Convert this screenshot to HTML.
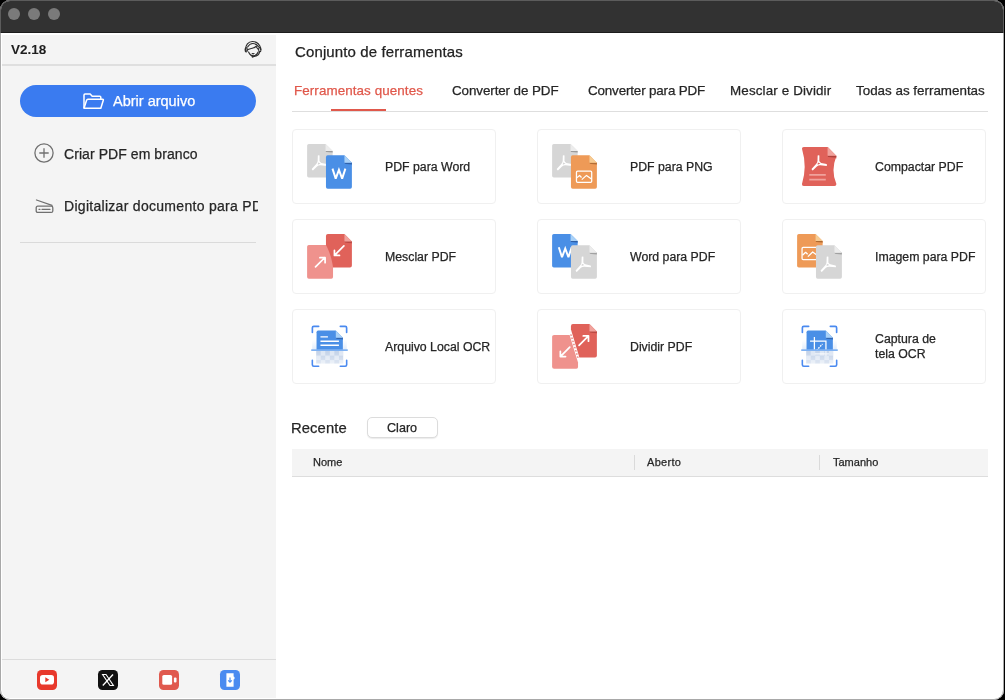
<!DOCTYPE html>
<html><head><meta charset="utf-8">
<style>
*{margin:0;padding:0;box-sizing:border-box}
html,body{width:1005px;height:700px;overflow:hidden;background:#000;font-family:"Liberation Sans",sans-serif}
#win{position:absolute;left:0;top:0;width:1004px;height:700px;border-radius:10px;overflow:hidden;background:#fff}
#frame{position:absolute;left:0;top:0;width:1004px;height:700px;border-radius:10px;border:1px solid #a8a8a8;pointer-events:none}
#ftop{position:absolute;left:0;top:0;width:1004px;height:33px;border-radius:10px 10px 0 0;border:1px solid #5c5c5c;border-bottom:0;pointer-events:none}
#hl{position:absolute;left:1px;top:33px;width:1002px;height:666px;border:1px solid rgba(255,255,255,0.95);border-top:0;border-radius:0 0 9px 9px;pointer-events:none}
.t{position:absolute;white-space:nowrap;line-height:1;will-change:transform;-webkit-text-stroke:0.25px currentColor}
.a{position:absolute}
.card{position:absolute;width:204px;height:75px;border:1px solid #f0f0f0;border-radius:4px;background:#fff}
svg{position:absolute;overflow:visible}
</style></head><body>
<div id="win">
<div class="a" style="left:0;top:0;width:1004px;height:33px;background:#323232;border-bottom:1px solid #1c1c1c"></div>
<div class="a" style="left:8px;top:8px;width:12px;height:12px;border-radius:50%;background:#7a7a7a"></div>
<div class="a" style="left:28px;top:8px;width:12px;height:12px;border-radius:50%;background:#7a7a7a"></div>
<div class="a" style="left:48px;top:8px;width:12px;height:12px;border-radius:50%;background:#7a7a7a"></div>
<div class="a" style="left:0;top:35px;width:276px;height:665px;background:#f4f4f4"></div>
<div class="a" style="left:0;top:64px;width:276px;height:2px;background:#dfdfdf"></div>
<div class="t" style="left:11px;top:42.77px;font-size:13.5px;color:#1e1e1e;font-weight:bold;letter-spacing:0px;-webkit-text-stroke:0.05px currentColor">V2.18</div>
<svg style="left:243px;top:38.5px" width="20" height="20" viewBox="0 0 20 20">
<g fill="none" stroke="#2e2e2e" stroke-width="1.15" stroke-linecap="round" stroke-linejoin="round">
<path d="M2.6 11.5 C2.2 6 5.5 2.5 9.4 2.5 C14 2.5 17.6 5.8 17.6 10.4"/>
<path d="M4.6 8 C6 5.6 7.8 4.5 9.8 4.5 C12 4.5 14 5.5 15.4 7.6"/>
<ellipse cx="3.2" cy="10.8" rx="1.1" ry="2.2"/>
<ellipse cx="16.8" cy="10.5" rx="1.2" ry="2.2"/>
<path d="M3.8 11.2 C6.5 9.6 9 9.6 11.2 8.6 C12.2 8.2 12.8 7.6 13.2 7.2 C13.6 8.6 14.2 9.6 15.4 10.4"/>
<path d="M5.6 13 C6.6 15.6 8.4 16.8 10.4 16.8 C12.4 16.8 14 15.6 15 13.2"/>
<path d="M9.2 14.6 C9.8 14.9 10.4 14.9 11 14.6"/>
<path d="M16.6 12.8 C16.2 15.2 13.6 17.2 10 17.6"/>
</g><circle cx="9.6" cy="17.6" r="1.1" fill="#2e2e2e"/></svg>
<div class="a" style="left:20px;top:85px;width:236px;height:32px;border-radius:16px;background:#3a7bf0"></div>
<svg style="left:82px;top:92px" width="23" height="18" viewBox="0 0 23 18">
<g fill="none" stroke="#fff" stroke-width="1.5" stroke-linejoin="round">
<path d="M2 16.3 V3 Q2 2 3 2 H8.2 L10.2 4.3 H17.8 Q18.8 4.3 18.8 5.3 V7"/>
<path d="M2 16.3 L4.6 8.2 Q4.9 7.2 5.9 7.2 H20.6 Q21.6 7.2 21.3 8.2 L18.8 16.3 Z"/>
</g></svg>
<div class="t" style="left:112.8px;top:94.43px;font-size:14.5px;color:#ffffff;font-weight:normal;letter-spacing:0px;">Abrir arquivo</div>
<svg style="left:34.3px;top:143px" width="20" height="20" viewBox="0 0 20 20">
<g fill="none" stroke="#707070" stroke-width="1.3">
<circle cx="10" cy="10" r="9.1"/>
<path d="M10 5.3 V14.7 M5.3 10 H14.7"/>
</g></svg>
<div class="t" style="left:64.4px;top:147.25px;font-size:14px;color:#262626;font-weight:normal;letter-spacing:0.07px;">Criar PDF em branco</div>
<svg style="left:35px;top:199px" width="19" height="15" viewBox="0 0 19 15">
<g fill="none" stroke="#707070" stroke-width="1.3" stroke-linecap="round">
<path d="M1.5 1 L17 6.3"/>
<rect x="1.2" y="7.2" width="16.6" height="6.2" rx="1.5"/>
<path d="M4 10.3 H5 M7 10.3 H15"/>
</g></svg>
<div class="a" style="left:0;top:190px;width:258px;height:30px;overflow:hidden"><div class="t" style="left:64.4px;top:9.25px;font-size:14px;color:#262626;font-weight:normal;letter-spacing:0.29px;">Digitalizar documento para PDF</div>
</div>
<div class="a" style="left:20px;top:242px;width:236px;height:1px;background:#dadada"></div>
<div class="a" style="left:0;top:659px;width:276px;height:1px;background:#dcdcdc"></div>
<svg style="left:37px;top:670px" width="20" height="20" viewBox="0 0 20 20">
<rect width="20" height="20" rx="4.5" fill="#e8392c"/>
<rect x="3" y="5" width="14" height="9.5" rx="2.8" fill="#fff"/>
<path d="M8.3 7.3 L12.3 9.75 L8.3 12.2 Z" fill="#e8392c"/>
</svg>
<svg style="left:98px;top:670px" width="20" height="20" viewBox="0 0 20 20">
<rect width="20" height="20" rx="4.5" fill="#111"/>
<path d="M4.6 4.5 H8 L15.4 15.5 H12 Z" fill="none" stroke="#fff" stroke-width="1.1"/>
<path d="M15 4.5 L4.8 15.5" stroke="#fff" stroke-width="1.3"/>
</svg>
<svg style="left:158.5px;top:670px" width="20" height="20" viewBox="0 0 20 20">
<rect width="20" height="20" rx="4.5" fill="#e0594e"/>
<rect x="3.3" y="5" width="9.8" height="9.8" rx="1.6" fill="#fff"/>
<rect x="14.9" y="7.4" width="2.6" height="5" rx="1" fill="#fff"/>
</svg>
<svg style="left:220px;top:670px" width="20" height="20" viewBox="0 0 20 20">
<rect width="20" height="20" rx="4.5" fill="#4b8bf0"/>
<path d="M6.4 3.3 H13.6 V6.5 L14.5 7 V9 L13.6 9.5 V16.7 H6.4 Z" fill="#fff"/>
<path d="M10 7.5 V12 M8.2 10.3 L10 12.2 L11.8 10.3" fill="none" stroke="#4b8bf0" stroke-width="1.2"/>
</svg>
<div class="t" style="left:294.8px;top:44.00px;font-size:15px;color:#222;font-weight:normal;letter-spacing:0.12px;">Conjunto de ferramentas</div>
<div class="t" style="left:294.0px;top:83.86px;font-size:13.4px;color:#e0584b;font-weight:normal;letter-spacing:0.09px;">Ferramentas quentes</div>
<div class="t" style="left:452px;top:83.86px;font-size:13.4px;color:#262626;font-weight:normal;letter-spacing:-0.09px;">Converter de PDF</div>
<div class="t" style="left:587.9px;top:83.86px;font-size:13.4px;color:#262626;font-weight:normal;letter-spacing:-0.15px;">Converter para PDF</div>
<div class="t" style="left:730.0px;top:83.86px;font-size:13.4px;color:#262626;font-weight:normal;letter-spacing:0.14px;">Mesclar e Dividir</div>
<div class="t" style="left:855.9px;top:83.86px;font-size:13.4px;color:#262626;font-weight:normal;letter-spacing:0px;">Todas as ferramentas</div>
<div class="a" style="left:292px;top:111px;width:696px;height:1px;background:#dedede"></div>
<div class="a" style="left:331px;top:109px;width:55px;height:2px;background:#e0584b"></div>
<div class="card" style="left:292px;top:129px"></div>
<svg style="left:302px;top:140px" width="55" height="55" viewBox="0 0 700 700"><defs>
<linearGradient id="shG" x1="0" y1="0" x2="0" y2="1"><stop offset="0" stop-color="#8a8a8a"/><stop offset="1" stop-color="#d6d6d6"/></linearGradient>
<linearGradient id="shB" x1="0" y1="0" x2="0" y2="1"><stop offset="0" stop-color="#244f94"/><stop offset="1" stop-color="#4a8fe6"/></linearGradient>
<linearGradient id="shO" x1="0" y1="0" x2="0" y2="1"><stop offset="0" stop-color="#9a5a25"/><stop offset="1" stop-color="#ee9a57"/></linearGradient>
<linearGradient id="shR" x1="0" y1="0" x2="0" y2="1"><stop offset="0" stop-color="#9c3530"/><stop offset="1" stop-color="#e0625a"/></linearGradient>
<linearGradient id="fadeC" x1="0" y1="0" x2="0" y2="1"><stop offset="0" stop-color="#fff" stop-opacity="0"/><stop offset="1" stop-color="#fff" stop-opacity="0.85"/></linearGradient>
<linearGradient id="glow" x1="0" y1="0" x2="0" y2="1"><stop offset="0" stop-color="#d6e6fb" stop-opacity="0"/><stop offset="1" stop-color="#c8ddf9" stop-opacity="1"/></linearGradient>
<pattern id="chk" x="180" y="395" width="116" height="116" patternUnits="userSpaceOnUse">
<rect width="116" height="116" fill="#dde6f3"/><rect width="58" height="58" fill="#c3d2e8"/><rect x="58" y="58" width="58" height="58" fill="#c3d2e8"/>
</pattern>
</defs><path d="M87,50 L300,50 L390,140 L390,456 Q390,478 368,478 L87,478 Q65,478 65,456 L65,72 Q65,50 87,50 Z" fill="#d6d6d6"/><path d="M300,140 L390,140 L390,168.8 L308,152.96 Z" fill="url(#shG)"/><path d="M300,50 L390,140 L300,140 Z" fill="#ececec"/><g transform="translate(78.6,152.7) scale(0.4002)"><path d="M308,110 Q306,120 302,290 Q295,345 250,392 L112,542 Q125,585 152,590 L282,458 Q330,420 392,422 L598,442 Q612,400 590,382 L422,346 Q372,330 360,288 L362,110 Q335,90 308,110 Z" fill="#fff"/><path d="M314,332 L394,366 L306,404 Z" fill="#d6d6d6"/></g><path d="M327,195 L540,195 L635,290 L635,598 Q635,620 613,620 L327,620 Q305,620 305,598 L305,217 Q305,195 327,195 Z" fill="#4a8fe6"/><path d="M540,290 L635,290 L635,320.4 L548,303.68 Z" fill="url(#shB)"/><path d="M540,195 L635,290 L540,290 Z" fill="#a9d1f7"/><path d="M388.0,364.0 L429.0,492.0 L470.0,379.4 L511.0,492.0 L552.0,364.0" fill="none" stroke="#fff" stroke-width="25" stroke-linejoin="miter" stroke-miterlimit="3"/></svg>
<div class="t" style="left:384.5px;top:160.99px;font-size:12.3px;color:#262626;font-weight:normal;letter-spacing:0px;">PDF para Word</div>
<div class="card" style="left:537px;top:129px"></div>
<svg style="left:547px;top:140px" width="55" height="55" viewBox="0 0 700 700"><path d="M87,50 L300,50 L390,140 L390,456 Q390,478 368,478 L87,478 Q65,478 65,456 L65,72 Q65,50 87,50 Z" fill="#d6d6d6"/><path d="M300,140 L390,140 L390,168.8 L308,152.96 Z" fill="url(#shG)"/><path d="M300,50 L390,140 L300,140 Z" fill="#ececec"/><g transform="translate(78.6,152.7) scale(0.4002)"><path d="M308,110 Q306,120 302,290 Q295,345 250,392 L112,542 Q125,585 152,590 L282,458 Q330,420 392,422 L598,442 Q612,400 590,382 L422,346 Q372,330 360,288 L362,110 Q335,90 308,110 Z" fill="#fff"/><path d="M314,332 L394,366 L306,404 Z" fill="#d6d6d6"/></g><path d="M327,195 L540,195 L635,290 L635,598 Q635,620 613,620 L327,620 Q305,620 305,598 L305,217 Q305,195 327,195 Z" fill="#ee9a57"/><path d="M540,290 L635,290 L635,320.4 L548,303.68 Z" fill="url(#shO)"/><path d="M540,195 L635,290 L540,290 Z" fill="#f6cb92"/><rect x="375" y="397" width="194" height="142" rx="14" fill="none" stroke="#fff" stroke-width="16"/><g fill="none" stroke="#fff" stroke-width="16" stroke-linejoin="round" stroke-linecap="butt"><path d="M378.0,482.0 L414.7,452.2 L439.4,476.9"/><path d="M442.5,504.7 L502.7,450.6 L566.0,497.0"/></g></svg>
<div class="t" style="left:629.5px;top:160.99px;font-size:12.3px;color:#262626;font-weight:normal;letter-spacing:0px;">PDF para PNG</div>
<div class="card" style="left:782px;top:129px"></div>
<svg style="left:792px;top:140px" width="55" height="55" viewBox="0 0 700 700"><path d="M150,88 L455,88 L565,205 Q490,395 565,560 Q567,586 540,586 L150,586 Q123,586 127,560 Q195,340 127,112 Q125,88 150,88 Z" fill="#e0625a"/><path d="M453,200 L565,200 L565,235.84 L461,216.12800000000001 Z" fill="url(#shR)"/><path d="M453,88 L565,200 L453,200 Z" fill="#f0a29c"/><g transform="translate(203.6,152.7) scale(0.4002)"><path d="M308,110 Q306,120 302,290 Q295,345 250,392 L112,542 Q125,585 152,590 L282,458 Q330,420 392,422 L598,442 Q612,400 590,382 L422,346 Q372,330 360,288 L362,110 Q335,90 308,110 Z" fill="#fff"/><path d="M314,332 L394,366 L306,404 Z" fill="#e0625a"/></g><path d="M220,445 H430 M220,505 H430" stroke="#f0a29c" stroke-width="22"/></svg>
<div class="t" style="left:874.5px;top:160.99px;font-size:12.3px;color:#262626;font-weight:normal;letter-spacing:0px;">Compactar PDF</div>
<div class="card" style="left:292px;top:219px"></div>
<svg style="left:302px;top:230px" width="55" height="55" viewBox="0 0 700 700"><path d="M87,190 L395,190 L395,190 L395,598 Q395,620 373,620 L87,620 Q65,620 65,598 L65,212 Q65,190 87,190 Z" fill="#ef928d"/><path d="M330,50 L540,50 L635,145 L635,452 Q635,476 611,476 L395,476 C382,380 350,270 305,190 L305,75 Q305,50 330,50 Z" fill="#e0625a"/><path d="M540,145 L635,145 L635,175.4 L548,158.68 Z" fill="url(#shR)"/><path d="M540,50 L635,145 L540,145 Z" fill="#f0a29c"/><g stroke="#fff" stroke-width="22" fill="none" stroke-linecap="round" stroke-linejoin="round"><path d="M172,468 L292,350 M228,352 H294 V416"/><path d="M533,203 L413,322 M413,258 V324 H477"/></g></svg>
<div class="t" style="left:384.5px;top:250.99px;font-size:12.3px;color:#262626;font-weight:normal;letter-spacing:0px;">Mesclar PDF</div>
<div class="card" style="left:537px;top:219px"></div>
<svg style="left:547px;top:230px" width="55" height="55" viewBox="0 0 700 700"><path d="M87,50 L300,50 L390,140 L390,456 Q390,478 368,478 L87,478 Q65,478 65,456 L65,72 Q65,50 87,50 Z" fill="#4a8fe6"/><path d="M300,140 L390,140 L390,168.8 L308,152.96 Z" fill="url(#shB)"/><path d="M300,50 L390,140 L300,140 Z" fill="#a9d1f7"/><path d="M150.0,220.0 L191.0,346.0 L232.0,235.1 L273.0,346.0 L314.0,220.0" fill="none" stroke="#fff" stroke-width="25" stroke-linejoin="miter" stroke-miterlimit="3"/><path d="M327,195 L540,195 L635,290 L635,598 Q635,620 613,620 L327,620 Q305,620 305,598 L305,217 Q305,195 327,195 Z" fill="#d6d6d6"/><path d="M540,290 L635,290 L635,320.4 L548,303.68 Z" fill="url(#shG)"/><path d="M540,195 L635,290 L540,290 Z" fill="#ececec"/><g transform="translate(318.6,297.7) scale(0.4002)"><path d="M308,110 Q306,120 302,290 Q295,345 250,392 L112,542 Q125,585 152,590 L282,458 Q330,420 392,422 L598,442 Q612,400 590,382 L422,346 Q372,330 360,288 L362,110 Q335,90 308,110 Z" fill="#fff"/><path d="M314,332 L394,366 L306,404 Z" fill="#d6d6d6"/></g></svg>
<div class="t" style="left:629.5px;top:250.99px;font-size:12.3px;color:#262626;font-weight:normal;letter-spacing:0px;">Word para PDF</div>
<div class="card" style="left:782px;top:219px"></div>
<svg style="left:792px;top:230px" width="55" height="55" viewBox="0 0 700 700"><path d="M87,50 L300,50 L390,140 L390,456 Q390,478 368,478 L87,478 Q65,478 65,456 L65,72 Q65,50 87,50 Z" fill="#ee9a57"/><path d="M300,140 L390,140 L390,168.8 L308,152.96 Z" fill="url(#shO)"/><path d="M300,50 L390,140 L300,140 Z" fill="#f6cb92"/><rect x="128" y="222" width="195" height="156" rx="14" fill="none" stroke="#fff" stroke-width="16"/><g fill="none" stroke="#fff" stroke-width="16" stroke-linejoin="round" stroke-linecap="butt"><path d="M133.0,322.0 L173.8,283.8 L198.5,308.5"/><path d="M202.3,338.9 L263.1,280.0 L320.0,322.0"/></g><path d="M327,195 L540,195 L635,290 L635,598 Q635,620 613,620 L327,620 Q305,620 305,598 L305,217 Q305,195 327,195 Z" fill="#d6d6d6"/><path d="M540,290 L635,290 L635,320.4 L548,303.68 Z" fill="url(#shG)"/><path d="M540,195 L635,290 L540,290 Z" fill="#ececec"/><g transform="translate(318.6,297.7) scale(0.4002)"><path d="M308,110 Q306,120 302,290 Q295,345 250,392 L112,542 Q125,585 152,590 L282,458 Q330,420 392,422 L598,442 Q612,400 590,382 L422,346 Q372,330 360,288 L362,110 Q335,90 308,110 Z" fill="#fff"/><path d="M314,332 L394,366 L306,404 Z" fill="#d6d6d6"/></g></svg>
<div class="t" style="left:874.5px;top:250.99px;font-size:12.3px;color:#262626;font-weight:normal;letter-spacing:0px;">Imagem para PDF</div>
<div class="card" style="left:292px;top:309px"></div>
<svg style="left:302px;top:320px" width="55" height="55" viewBox="0 0 700 700"><g fill="none" stroke="#4a8af0" stroke-width="21" stroke-linecap="round"><path d="M132,158 V100 Q132,82 150,82 H212"/><path d="M488,82 H550 Q568,82 568,100 V158"/><path d="M132,512 V570 Q132,588 150,588 H212"/><path d="M488,588 H550 Q568,588 568,570 V512"/></g><rect x="130" y="250" width="440" height="125" fill="url(#glow)" opacity="0.6"/><path d="M205,135 L430,135 L520,225 L520,385 L185,385 L185,155 Q185,135 205,135 Z" fill="#4a8fe6"/><path d="M430,225 L520,225 L520,253.8 L438,237.96 Z" fill="url(#shB)"/><path d="M430,135 L520,225 L430,225 Z" fill="#a9d1f7"/><path d="M235,215 H330 M235,270 H470 M235,322 H470" stroke="#fff" stroke-width="18"/><rect x="180" y="395" width="345" height="160" fill="url(#chk)"/><rect x="140" y="395" width="420" height="170" fill="url(#fadeC)" opacity="0.55"/><rect x="115" y="372" width="470" height="24" rx="10" fill="#80b2f2"/></svg>
<div class="t" style="left:384.5px;top:340.99px;font-size:12.3px;color:#262626;font-weight:normal;letter-spacing:0px;">Arquivo Local OCR</div>
<div class="card" style="left:537px;top:309px"></div>
<svg style="left:547px;top:320px" width="55" height="55" viewBox="0 0 700 700"><path d="M90,190 L288,190 L395,540 L395,598 Q395,620 373,620 L90,620 Q65,620 65,596 L65,214 Q65,190 90,190 Z" fill="#ef928d"/><path d="M330,50 L540,50 L635,145 L635,452 Q635,476 611,476 L412,476 L305,122 L305,75 Q305,50 330,50 Z" fill="#e0625a"/><path d="M540,145 L635,145 L635,175.4 L548,158.68 Z" fill="url(#shR)"/><path d="M540,50 L635,145 L540,145 Z" fill="#f0a29c"/><path d="M303,182 L401,500" stroke="#e46a62" stroke-width="15" stroke-dasharray="20 22"/><g stroke="#fff" stroke-width="22" fill="none" stroke-linecap="round" stroke-linejoin="round"><path d="M290,345 L170,465 M170,400 V466 H236"/><path d="M408,322 L528,203 M462,203 H528 V269"/></g></svg>
<div class="t" style="left:629.5px;top:340.99px;font-size:12.3px;color:#262626;font-weight:normal;letter-spacing:0px;">Dividir PDF</div>
<div class="card" style="left:782px;top:309px"></div>
<svg style="left:792px;top:320px" width="55" height="55" viewBox="0 0 700 700"><g fill="none" stroke="#4a8af0" stroke-width="21" stroke-linecap="round"><path d="M132,158 V100 Q132,82 150,82 H212"/><path d="M488,82 H550 Q568,82 568,100 V158"/><path d="M132,512 V570 Q132,588 150,588 H212"/><path d="M488,588 H550 Q568,588 568,570 V512"/></g><rect x="130" y="250" width="440" height="125" fill="url(#glow)" opacity="0.6"/><path d="M205,135 L430,135 L520,225 L520,385 L185,385 L185,155 Q185,135 205,135 Z" fill="#4a8fe6"/><path d="M430,225 L520,225 L520,253.8 L438,237.96 Z" fill="url(#shB)"/><path d="M430,135 L520,225 L430,225 Z" fill="#a9d1f7"/><g stroke="#fff" stroke-width="16" fill="none"><path d="M285,215 V392 M230,270 H432 V392"/><path d="M312,388 L388,305" stroke-dasharray="22 12"/></g><rect x="180" y="395" width="345" height="160" fill="url(#chk)"/><g stroke="#fff" stroke-width="16" fill="none" opacity="0.75"><path d="M432,395 V455 M290,432 H470"/></g><rect x="140" y="395" width="420" height="170" fill="url(#fadeC)" opacity="0.55"/><rect x="115" y="372" width="470" height="24" rx="10" fill="#80b2f2"/></svg>
<div class="t" style="left:874.8px;top:333.19px;font-size:12.3px;color:#262626;font-weight:normal;letter-spacing:0px;">Captura de</div>
<div class="t" style="left:874.8px;top:348.19px;font-size:12.3px;color:#262626;font-weight:normal;letter-spacing:0px;">tela OCR</div>
<div class="t" style="left:291.0px;top:420.57px;font-size:14.8px;color:#262626;font-weight:normal;letter-spacing:0.1px;">Recente</div>
<div class="a" style="left:367px;top:417px;width:71px;height:21px;border-radius:5px;background:#fff;border:1px solid #dcdcdc;box-shadow:0 1px 1px rgba(0,0,0,0.08)"></div>
<div class="t" style="left:387px;top:421.63px;font-size:12.6px;color:#262626;font-weight:normal;letter-spacing:0px;">Claro</div>
<div class="a" style="left:292px;top:449px;width:696px;height:28px;background:#f4f4f4;border-bottom:1px solid #dddddd"></div>
<div class="a" style="left:634px;top:455px;width:1px;height:15px;background:#dadada"></div>
<div class="a" style="left:819px;top:455px;width:1px;height:15px;background:#dadada"></div>
<div class="t" style="left:312.9px;top:457.49px;font-size:11px;color:#262626;font-weight:normal;letter-spacing:0px;">Nome</div>
<div class="t" style="left:647.2px;top:457.49px;font-size:11px;color:#262626;font-weight:normal;letter-spacing:0.3px;">Aberto</div>
<div class="t" style="left:832.7px;top:457.49px;font-size:11px;color:#262626;font-weight:normal;letter-spacing:0px;">Tamanho</div>
</div>
<div id="hl"></div><div id="frame"></div><div id="ftop"></div>
</body></html>
